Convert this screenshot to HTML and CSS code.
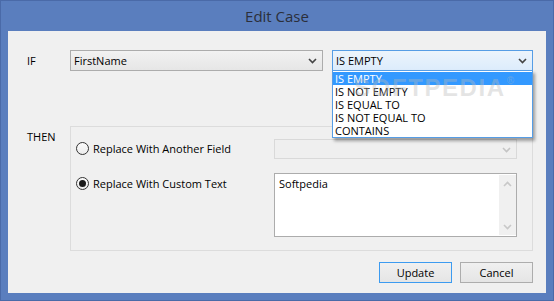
FILE: index.html
```html
<!DOCTYPE html>
<html>
<head>
<meta charset="utf-8">
<title>Edit Case</title>
<link rel="stylesheet" href="styles.css">
</head>
<body>
<div class="window">
  <div class="titlebar">Edit Case</div>
  <div class="client">
    <div class="if-row">
      <div class="label">IF</div>
      <div class="combo">
        <span class="combo-text">FirstName</span>
        <svg class="chev" width="9" height="6" viewBox="0 0 9 6"><path d="M1 1 L4.5 4.5 L8 1" fill="none" stroke="#444" stroke-width="1.6"/></svg>
      </div>
      <div class="combo-wrap">
        <div class="combo focused">
          <span class="combo-text">IS EMPTY</span>
          <svg class="chev" width="9" height="6" viewBox="0 0 9 6"><path d="M1 1 L4.5 4.5 L8 1" fill="none" stroke="#444" stroke-width="1.6"/></svg>
        </div>
        <ul class="dropdown">
          <li class="selected">IS EMPTY</li>
          <li>IS NOT EMPTY</li>
          <li>IS EQUAL TO</li>
          <li>IS NOT EQUAL TO</li>
          <li>CONTAINS</li>
        </ul>
        <div class="watermark">SOFTPEDIA<sup>®</sup></div>
      </div>
    </div>
    <div class="then-row">
      <div class="label then">THEN</div>
      <div class="group">
        <div class="opt-row first">
          <label class="radio"><span class="circle"></span>Replace With Another Field</label>
          <div class="combo disabled">
            <svg class="chev" width="9" height="6" viewBox="0 0 9 6"><path d="M1 1 L4.5 4.5 L8 1" fill="none" stroke="#c4c4c4" stroke-width="1.6"/></svg>
          </div>
        </div>
        <div class="opt-row second">
          <label class="radio checked"><span class="circle"></span>Replace With Custom Text</label>
          <div class="textarea">
            <div class="ta-text">Softpedia</div>
            <div class="scrollbar">
              <svg width="9" height="6" viewBox="0 0 9 6"><path d="M1 5 L4.5 1.5 L8 5" fill="none" stroke="#c8c8c8" stroke-width="1.6"/></svg>
              <svg width="9" height="6" viewBox="0 0 9 6"><path d="M1 1 L4.5 4.5 L8 1" fill="none" stroke="#c8c8c8" stroke-width="1.6"/></svg>
            </div>
          </div>
        </div>
      </div>
    </div>
    <div class="buttons">
      <button class="btn default">Update</button>
      <button class="btn">Cancel</button>
    </div>
  </div>
</div>
</body>
</html>
```
FILE: styles.css
```css
* { box-sizing: border-box; }
html, body { margin: 0; padding: 0; }
body {
  width: 554px;
  height: 301px;
  overflow: hidden;
  font-family: "Open Sans", "Noto Sans", sans-serif;
  font-size: 11px;
  color: #000;
}
.window {
  width: 554px;
  height: 301px;
  background: #5a7ebe;
  border: 1px solid #4a6aa8;
  display: flex;
  flex-direction: column;
  padding: 0 7px 7px 7px;
}
.titlebar {
  height: 30px;
  display: flex;
  align-items: center;
  justify-content: center;
  font-size: 15px;
  color: #2b2f3a;
  padding-bottom: 1px;
}
.client {
  flex: 1;
  background: #f0f0f0;
  padding: 19px 13px 10px 19px;
  display: flex;
  flex-direction: column;
}
.if-row {
  display: flex;
  align-items: center;
  height: 21px;
}
.label {
  width: 43px;
  flex: none;
}
.combo {
  position: relative;
  height: 21px;
  width: 253px;
  border: 1px solid #acacac;
  background: linear-gradient(#f2f2f2, #e6e6e6);
  display: flex;
  align-items: center;
  padding-left: 3px;
}
.combo-wrap {
  position: relative;
  margin-left: 9px;
  width: 201px;
}
.combo.focused {
  width: 201px;
  border-color: #569de5;
  background: linear-gradient(#ecf4fc, #dcecfc);
}
.combo-text { line-height: 1; }
.chev {
  position: absolute;
  right: 5px;
  top: 7px;
}
.dropdown {
  position: absolute;
  top: 20px;
  left: 0;
  width: 201px;
  margin: 0;
  padding: 1px 0 0 0;
  list-style: none;
  background: #fff;
  border: 1px solid #569de5;
  box-shadow: 2px 3px 3px rgba(0,0,0,0.35);
  z-index: 2;
}
.dropdown li {
  height: 13px;
  line-height: 13px;
  padding-left: 2px;
  white-space: nowrap;
}
.dropdown li.selected {
  background: #3399ff;
  color: #fff;
}
.watermark {
  position: absolute;
  top: 17px;
  left: 22px;
  z-index: 3;
  font-family: "Liberation Sans", sans-serif;
  font-weight: bold;
  font-size: 24px;
  line-height: 28px;
  letter-spacing: 1.6px;
  color: rgba(185,185,185,0.38);
  pointer-events: none;
  white-space: nowrap;
}
.watermark sup { font-size: 10px; font-weight: normal; vertical-align: 12px; margin-left: 1px; }
.then-row {
  display: flex;
  align-items: flex-start;
  margin-top: 55px;
}
.then { margin-top: 3px; }
.group {
  width: 463px;
  height: 125px;
  border: 1px solid #dcdcdc;
  padding: 12px 15px 0 5px;
  display: flex;
  flex-direction: column;
}
.opt-row {
  display: flex;
  align-items: center;
}
.opt-row.first .radio { margin-top: -2px; }
.opt-row.second {
  align-items: flex-start;
  margin-top: 14px;
}
.radio {
  width: 198px;
  flex: none;
  display: flex;
  align-items: center;
  gap: 4px;
}
.second .radio { margin-top: 3px; }
.circle {
  width: 13px;
  height: 13px;
  border-radius: 50%;
  border: 1px solid #333;
  background: linear-gradient(#fcfcfc, #ececec);
  display: flex;
  align-items: center;
  justify-content: center;
}
.checked .circle::after {
  content: "";
  width: 7px;
  height: 7px;
  border-radius: 50%;
  background: #1a1a1a;
}
.combo.disabled {
  width: 243px;
  height: 20px;
  border-color: #d9d9d9;
  background: #efefef;
}
.textarea {
  width: 243px;
  height: 64px;
  border: 1px solid #acacac;
  background: #fff;
  display: flex;
}
.ta-text {
  flex: 1;
  padding: 2px 4px;
}
.scrollbar {
  width: 17px;
  margin: 1px 0 1px 0;
  background: #f0f0f0;
  display: flex;
  flex-direction: column;
  justify-content: space-between;
  align-items: center;
  padding: 6px 0 5px 0;
}
.buttons {
  display: flex;
  justify-content: flex-end;
  gap: 8px;
  margin-top: 11px;
}
.btn {
  width: 73px;
  height: 21px;
  font-family: inherit;
  font-size: 11px;
  color: #000;
  border: 1px solid #adadad;
  background: linear-gradient(#f0f0f0, #e5e5e5);
  padding: 0;
  margin: 0;
}
.btn.default {
  border-color: #3c9bf0;
}
```
